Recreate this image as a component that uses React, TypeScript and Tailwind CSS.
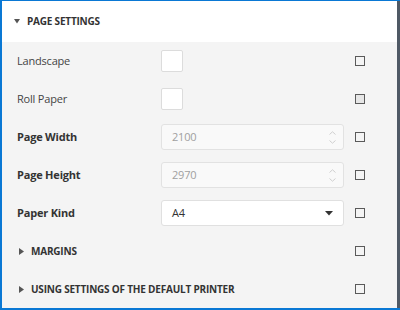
import React from 'react';

type Row =
  | { kind: 'toggle'; label: string; checked?: boolean }
  | { kind: 'number'; label: string; value: string }
  | { kind: 'select'; label: string; value: string }
  | { kind: 'group'; label: string };

const rows: Row[] = [
  { kind: 'toggle', label: 'Landscape' },
  { kind: 'toggle', label: 'Roll Paper', checked: true },
  { kind: 'number', label: 'Page Width', value: '2100' },
  { kind: 'number', label: 'Page Height', value: '2970' },
  { kind: 'select', label: 'Paper Kind', value: 'A4' },
  { kind: 'group', label: 'Margins' },
  { kind: 'group', label: 'Using settings of the default printer' },
];

function SmallBox({ shaded }: { shaded?: boolean }) {
  return (
    <span
      className={`block h-[10px] w-[10px] border-[1.5px] border-[#5a5a5a] ${
        shaded ? 'bg-[#e6e6e6]' : 'bg-[#f4f4f4]'
      }`}
    />
  );
}

function Control({ row }: { row: Row }) {
  if (row.kind === 'toggle') {
    return <div className="h-[22px] w-[22px] rounded-[2px] border border-[#dcdcdc] bg-white" />;
  }
  if (row.kind === 'number') {
    return (
      <div className="flex h-[26px] w-[183px] items-center justify-between rounded-[3px] border border-[#e2e2e2] bg-[#f9f9f9] pl-[10px] pr-[7px] text-[11px] text-[#a0a0a0]">
        <span>{row.value}</span>
        <span className="flex flex-col gap-[5px]">
          <svg width="7" height="4" viewBox="0 0 7 4">
            <path d="M0.5 3.5 L3.5 0.8 L6.5 3.5" fill="none" stroke="#cfcfcf" strokeWidth="1" />
          </svg>
          <svg width="7" height="4" viewBox="0 0 7 4">
            <path d="M0.5 0.5 L3.5 3.2 L6.5 0.5" fill="none" stroke="#cfcfcf" strokeWidth="1" />
          </svg>
        </span>
      </div>
    );
  }
  if (row.kind === 'select') {
    return (
      <div className="flex h-[26px] w-[183px] items-center justify-between rounded-[3px] border border-[#e0e0e0] bg-white pl-[10px] pr-[10px] text-[11px] text-[#333]">
        <span>{row.value}</span>
        <svg width="8" height="5" viewBox="0 0 8 5">
          <path d="M0 0 L8 0 L4 4.5 Z" fill="#333" />
        </svg>
      </div>
    );
  }
  return null;
}

export default function App() {
  return (
    <div
      className="flex h-[310px] w-[400px] border-t border-b-2 border-l-2 border-[#0a78d4] bg-white text-[#333] tracking-[-0.2px]"
      style={{ fontFamily: '"Open Sans", "Noto Sans", sans-serif' }}
    >
      <div className="flex flex-1 flex-col">
        {/* Section header */}
        <div className="flex h-[41px] items-center gap-[7px] bg-white pl-[12px]">
          <svg width="6" height="5" viewBox="0 0 6 5">
            <path d="M0 0 L6 0 L3 4.5 Z" fill="#555" />
          </svg>
          <span className="text-[10px] font-bold uppercase">Page Settings</span>
        </div>

        <div className="flex flex-1 flex-col bg-[#f4f4f4]">
          {rows.map(row => (
            <div key={row.label} className="flex h-[38px] items-center pl-[15px]">
              {row.kind === 'group' ? (
                <div className="flex w-[327px] items-center gap-[7px] pl-[2px]">
                  <svg width="5" height="7" viewBox="0 0 5 7">
                    <path d="M0 0 L5 3.5 L0 7 Z" fill="#555" />
                  </svg>
                  <span className="text-[10px] font-bold uppercase">{row.label}</span>
                </div>
              ) : (
                <>
                  <span
                    className={`w-[144px] text-[11px] ${
                      row.kind === 'toggle' ? 'text-[#444]' : 'font-bold text-[#333]'
                    }`}
                  >
                    {row.label}
                  </span>
                  <div className="w-[183px]">
                    <Control row={row} />
                  </div>
                </>
              )}
              <div className="ml-[11px]">
                <SmallBox shaded={row.kind === 'toggle' && row.checked} />
              </div>
            </div>
          ))}
        </div>
      </div>
      <div className="w-[3px] bg-[#4f5965]" />
    </div>
  );
}
